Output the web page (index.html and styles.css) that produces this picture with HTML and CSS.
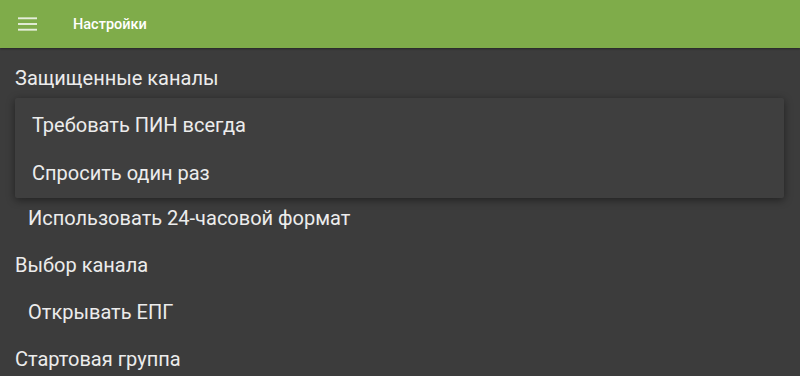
FILE: index.html
```html
<!DOCTYPE html>
<html lang="ru">
<head>
<meta charset="utf-8">
<title>Настройки</title>
<link rel="stylesheet" href="styles.css">
</head>
<body>
<header class="appbar">
  <svg class="menu-icon" width="20" height="14" viewBox="0 0 20 14">
    <rect x="0" y="0" width="20" height="2" fill="currentColor"/>
    <rect x="0" y="6" width="20" height="2" fill="currentColor"/>
    <rect x="0" y="12" width="20" height="2" fill="currentColor"/>
  </svg>
  <div class="title">Настройки</div>
</header>
<main class="list">
  <div class="row header-row">Защищенные каналы</div>
  <div class="covered"></div>
  <div class="row sub-row">Использовать 24-часовой формат</div>
  <div class="row header-row">Выбор канала</div>
  <div class="row sub-row">Открывать ЕПГ</div>
  <div class="row header-row">Стартовая группа</div>
</main>
<div class="popup">
  <div class="popup-item">Требовать ПИН всегда</div>
  <div class="popup-item">Спросить один раз</div>
</div>
</body>
</html>
```
FILE: styles.css
```css
html, body {
  margin: 0;
  padding: 0;
  height: 100%;
  overflow: hidden;
}
body {
  background: #3c3c3c;
  font-family: Roboto, "Noto Sans", sans-serif;
  color: #ececec;
  position: relative;
}
.appbar {
  height: 48px;
  background: #7fac4a;
  display: flex;
  align-items: center;
  box-shadow: 0 1px 2px rgba(0,0,0,0.35);
  position: relative;
  z-index: 1;
}
.menu-icon {
  color: rgba(255,255,255,0.8);
  margin-left: 18px;
  width: 19px;
  height: 14px;
}
.title {
  margin-left: 36px;
  font-size: 14.5px;
  font-weight: 500;
  color: #ffffff;
}
.list {
  padding-top: 6px;
}
.row {
  height: 47px;
  display: flex;
  align-items: center;
  font-size: 20px;
  white-space: nowrap;
}
.covered {
  height: 93px;
}
.header-row {
  padding-left: 15px;
}
.sub-row {
  padding-left: 28px;
}
.popup {
  position: absolute;
  left: 15px;
  top: 98px;
  width: 769px;
  padding: 3px 0 1px;
  background: #3f3f3f;
  border-radius: 2px;
  box-shadow: 0 2px 8px rgba(0,0,0,0.45);
  z-index: 2;
}
.popup-item {
  height: 48px;
  display: flex;
  align-items: center;
  padding-left: 17px;
  font-size: 20px;
  white-space: nowrap;
}
```
